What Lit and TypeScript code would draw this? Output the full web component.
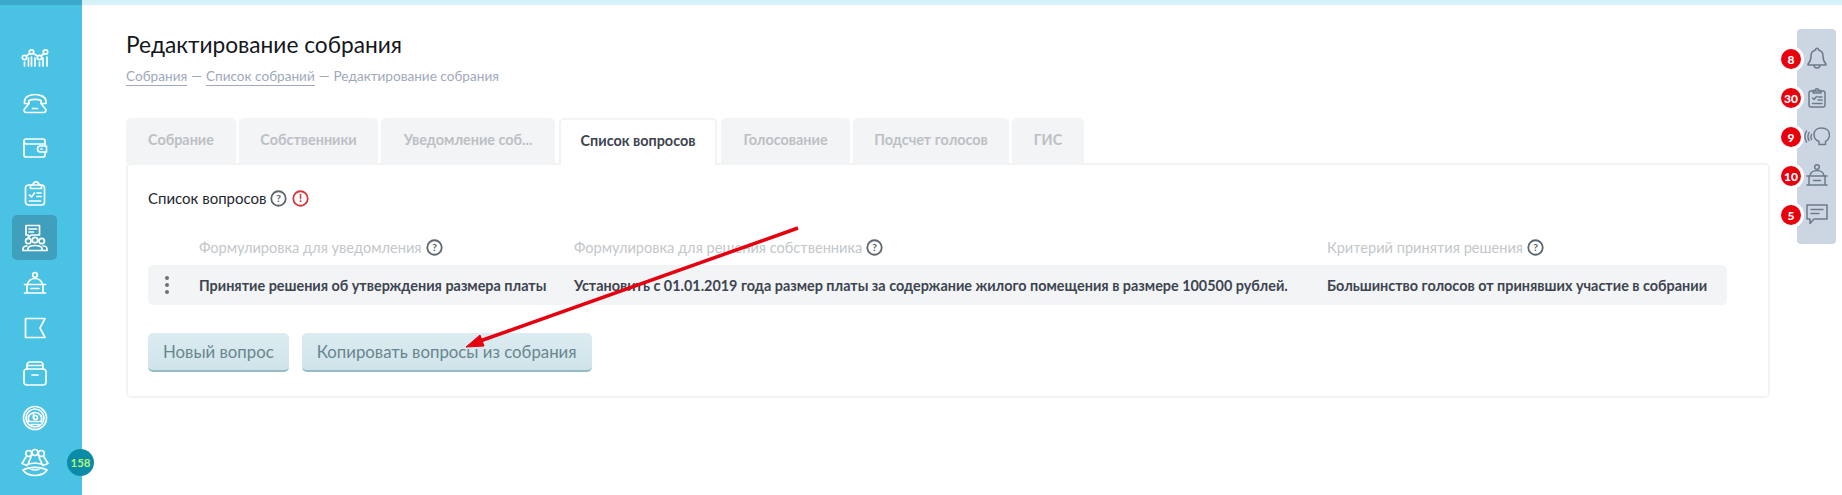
import { LitElement, html, css, svg } from "lit";
import { customElement } from "lit/decorators.js";

const sideIcons = [
  svg`<circle cx="4.500" cy="14.500" r="2.200"/><circle cx="11.500" cy="9" r="2.200"/><circle cx="19.500" cy="14.500" r="2.200"/><circle cx="25.500" cy="9" r="2.200"/><path d="M6.300 13.200l3.500-2.800M13.300 10.400l4.500 2.800M21.200 13l2.800-2.500M4.500 19v4M8.500 15v8M11.500 14v9M15 15v8M19.500 19v4M23 15v8M27 14v9"/>`,
  svg`<path d="M4.500 15.500v-2C4.500 8.500 10 6.500 15 6.500s11 2 11 7v2h-5v-3c-3-1.500-9-1.500-12 0v3zM9 15.500l-4.500 5.500c-1 2 0 3.500 2 3.500h17c2 0 3-1.500 2-3.500L21 15.500M12.500 20.500h5"/>`,
  svg`<path d="M25 12V8a2 2 0 0 0-2-2H6a2 2 0 0 0-2 2v14a2 2 0 0 0 2 2h17a2 2 0 0 0 2-2v-3M4 8.500a2.500 2.500 0 0 0 2.500 2.500H25"/><path d="M26.500 13h-6a3 3 0 0 0 0 6h6z"/><path d="M21 16h1"/>`,
  svg`<rect x="5.500" y="7" width="19" height="20" rx="3"/><path d="M10.500 10.500v-3l2.500-1c1-3.500 5-3.500 6 0l2.500 1v3zM9.500 17l2 2 3-4M17 15h4M17 18.500h4M9.500 23h11"/>`,
  svg`<path d="M6 2.500h13.500v9.500H11l-2.500 3v-3H6zM9 6h7.500M9 9h4.500"/><circle cx="8.300" cy="18" r="2.700"/><circle cx="15" cy="17" r="2.700"/><circle cx="21.700" cy="18" r="2.700"/><path d="M3 27.500v-1.500c0-2 1.500-3 4-3M27 27.500v-1.500c0-2-1.500-3-4-3M8 27.500v-1.500c0-2.500 3-3.500 7-3.500s7 1 7 3.500v1.500zM3 27.500h24"/>`,
  svg`<circle cx="15" cy="7" r="2.300"/><path d="M7.500 16c1-3 4-5.500 7.500-5.500s6.500 2.500 7.500 5.500M4.500 16.500h21M7 16.500v8.500h16v-8.500M4.500 25h21M11 20.500h8"/>`,
  svg`<path d="M5.500 5.500H25L20 15l5 9.500H5.500z"/>`,
  svg`<rect x="4" y="11" width="22" height="16" rx="3"/><path d="M7 11V7a3 3 0 0 1 3-3h10a3 3 0 0 1 3 3v4M7 7.500h16M12 17h6"/>`,
  svg`<circle cx="15" cy="15" r="11.500"/><circle cx="15" cy="15" r="9"/><path d="M8.800 18.500c-2-5.500 2-9 6.200-9s8.200 3.500 6.200 9zM11 21.500h8"/><circle cx="15.500" cy="14.500" r="2"/><path d="M13.500 10.500v4"/>`,
  svg`<circle cx="8.700" cy="5.500" r="3"/><circle cx="15" cy="4.500" r="3"/><circle cx="21.300" cy="5.500" r="3"/><path d="M6 9L2 15.500l5 2 1.500-1.500 6.500-1 6.500 1 1.500 1.500 5-2L24 9M11 9l-3 7M19 9l3 7M3 22c6-3.500 18-3.500 24 0-3 4.500-7 5.500-12 5.500S6 26.500 3 22zM10 20.500c2 2 8 2 10 0"/>`,
];

const rightIcons = [
  svg`<path d="M4 19c2-2 3-3.500 3-8 0-3.500 2.500-5.500 4.500-6 0-2.500 3-2.500 3 0 2 .5 4.500 2.500 4.500 6 0 4.500 1 6 3 8v1H4zM10 20c0 4 6 4 6 0"/>`,
  svg`<rect x="5" y="7" width="16" height="16" rx="2"/><path d="M9 9V6.500h2c.5-2.500 3.500-2.500 4 0h2V9zM8.500 14l1.500 1.500 2.500-3M14 13h4M14 16h4M8.500 19.500H18"/>`,
  svg`<path d="M15 21.500v-3c-3-1-5-3.500-5-7 0-4 3-6.500 7.500-6.500 4.500 0 8 2.500 8 7 0 3-1.500 5-4 6.500v3zM2.500 8c-2 3.500-2 7.500 0 11M5 9.500c-1.300 2.500-1.300 5.500 0 8M7.500 11.500c-.7 1.500-.7 3.500 0 5"/>`,
  svg`<circle cx="13" cy="5" r="2.300"/><path d="M6 13.500c.5-3 3.500-5 7-5s6.500 2 7 5M3 14h20M5 14v9h16v-9M3 23h20M9.500 18.500h7"/>`,
  svg`<path d="M3 4h20v14H10l-4 4.500V18H3zM7 8.500h12M7 12.500h8"/>`,
];

const Help = html`<svg class="help" viewBox="0 0 16 16"><circle cx="8" cy="8" r="6.800"/><text x="8" y="11.300" text-anchor="middle">?</text></svg>`;

@customElement("app-root")
export class AppRoot extends LitElement {
  static styles = css`
    :host { display: block; position: relative; height: 495px; overflow: hidden; background: #fff;
      font-family: "Lato", "Noto Sans", sans-serif; color: #222; }
    .top { height: 5px; background: #d6f1f7; }
    .top i { display: block; width: 82px; height: 5px; background: #3ba9cb; }
    .page { display: flex; height: 490px; }
    .side { width: 82px; flex: none; background: #4ac2e4; padding-top: 30px; box-sizing: border-box; position: relative; }
    .sitem { width: 45px; height: 45px; margin-left: 12px; display: flex; align-items: center; justify-content: center; border-radius: 5px; }
    .sitem.on { background: #3f9fbd; }
    .sitem svg { width: 30px; height: 30px; fill: none; stroke: #fff; stroke-width: 1.700; stroke-linejoin: round; stroke-linecap: round; }
    .count { position: absolute; left: 67px; top: 444px; width: 27px; height: 27px; border-radius: 50%; background: #0b8ba6; color: #b1f57b;
      font-size: 11.500px; font-weight: 700; display: flex; align-items: center; justify-content: center; }
    .main { flex: none; width: 1644px; margin-left: 44px; padding-top: 27px; }
    h1 { margin: 0; font-size: 22.700px; font-weight: 400; line-height: 26px; color: #14171c; }
    .crumbs { margin-top: 10px; font-size: 13.600px; line-height: 17px; color: #a0a9bb; display: flex; gap: 4px; }
    .crumbs a { border-bottom: 1px solid #a0a9bb; }
    .tabs { display: flex; margin-top: 32px; height: 45px; }
    .tab { height: 45px; box-sizing: border-box; background: #f2f4f6; color: #bcc0c4; font-size: 14.400px; font-weight: 700; border-radius: 5px 5px 0 0;
      display: flex; align-items: center; justify-content: center; margin-right: 3px; padding-bottom: 2px; }
    .tab.on { background: #fff; color: #3d4450; border: 2px solid #f2f3f5; border-bottom: 0; margin: 0 4px 0 1px; position: relative; z-index: 1; height: 47px; padding-bottom: 4px; }
    .panel { border: 2px solid #f2f3f5; border-radius: 5px; height: 235px; box-sizing: border-box; padding: 24px 41px 0 20px; }
    .ttl { font-size: 15px; line-height: 18px; color: #23282f; display: flex; align-items: center; gap: 4px; }
    .help { width: 17px; height: 17px; fill: none; stroke: #5b666e; stroke-width: 1.700; flex: none; }
    .help text { font-size: 9.500px; font-weight: 900; fill: #5b666e; stroke: none; font-family: "Lato", sans-serif; }
    .warn { width: 17px; height: 17px; flex: none; margin-left: 1px; fill: none; stroke: #d9363a; stroke-width: 1.700; }
    .warn text { font-size: 10.500px; font-weight: 900; fill: #d9363a; stroke: none; font-family: "Lato", sans-serif; }
    .grid { display: grid; grid-template-columns: 51px 375px 753px 1fr; }
    .hd { margin-top: 26px; height: 28px; align-items: center; font-size: 14.600px; color: #c3c7cb; }
    .hd div { display: flex; align-items: center; gap: 4px; }
    .row { margin-top: 4px; height: 40px; background: #f2f4f6; border-radius: 5px; align-items: center; font-size: 14.400px; font-weight: 700; color: #3d4450; white-space: nowrap; }
    .dots { display: flex; flex-direction: column; gap: 2.500px; align-items: center; width: 38px; }
    .dots i { width: 4.500px; height: 4.500px; border-radius: 50%; background: #68727b; }
    .btns { display: flex; gap: 13px; margin-top: 28px; }
    .btn { height: 39px; box-sizing: border-box; padding: 0 15px; border-radius: 5px; background: linear-gradient(#dcecf1, #cfe4ea); border-bottom: 2px solid #94bcc4;
      color: #69858e; font-size: 16.800px; display: flex; align-items: center; }
    .right { position: absolute; left: 1797px; top: 29px; width: 39px; height: 215px; padding-top: 9px; box-sizing: border-box; background: #ccd6e3; border-radius: 4px; }
    .ritem { height: 39px; position: relative; display: flex; align-items: center; justify-content: center; }
    .ritem svg { width: 26px; height: 26px; fill: none; stroke: #6c7b88; stroke-width: 1.500; stroke-linejoin: round; stroke-linecap: round; }
    .badge { position: absolute; left: -16px; top: 11px; width: 20px; height: 20px; border-radius: 50%; background: #e8000d; color: #fff; font-size: 12px; font-weight: 900;
      display: flex; align-items: center; justify-content: center; box-shadow: 0 0 0 3px #fff; }
    .arrow { position: absolute; left: 0; top: 0; width: 1842px; height: 495px; pointer-events: none; }
  `;

  render() {
    const tabs = [["Собрание", 110], ["Собственники", 139], ["Уведомление соб...", 174]];
    const tabs2 = [["Голосование", 129], ["Подсчет голосов", 156], ["ГИС", 72]];
    const badges = ["8", "30", "9", "10", "5"];
    return html`
      <div class="top"><i></i></div>
      <div class="page">
        <nav class="side">
          ${sideIcons.map((p, i) => html`<div class="sitem ${i === 4 ? "on" : ""}"><svg viewBox="0 0 30 30">${p}</svg></div>`)}
          <div class="count">158</div>
        </nav>
        <main class="main">
          <h1>Редактирование собрания</h1>
          <div class="crumbs"><a>Собрания</a><span>—</span><a>Список собраний</a><span>—</span><span>Редактирование собрания</span></div>
          <div class="tabs">
            ${tabs.map(([t, w]) => html`<div class="tab" style="width:${w}px">${t}</div>`)}
            <div class="tab on" style="width:158px">Список вопросов</div>
            ${tabs2.map(([t, w]) => html`<div class="tab" style="width:${w}px">${t}</div>`)}
          </div>
          <section class="panel">
            <div class="ttl">Список вопросов ${Help}
              <svg class="warn" viewBox="0 0 16 16"><circle cx="8" cy="8" r="6.800"/><text x="8" y="11.500" text-anchor="middle">!</text></svg>
            </div>
            <div class="grid hd">
              <span></span>
              <div>Формулировка для уведомления ${Help}</div>
              <div>Формулировка для решения собственника ${Help}</div>
              <div>Критерий принятия решения ${Help}</div>
            </div>
            <div class="grid row">
              <div class="dots"><i></i><i></i><i></i></div>
              <div>Принятие решения об утверждения размера платы</div>
              <div>Установить с 01.01.2019 года размер платы за содержание жилого помещения в размере 100500 рублей.</div>
              <div>Большинство голосов от принявших участие в собрании</div>
            </div>
            <div class="btns">
              <div class="btn">Новый вопрос</div>
              <div class="btn">Копировать вопросы из собрания</div>
            </div>
          </section>
        </main>
      </div>
      <aside class="right">
        ${rightIcons.map((p, i) => html`<div class="ritem"><span class="badge">${badges[i]}</span><svg viewBox="0 0 26 26">${p}</svg></div>`)}
      </aside>
      <svg class="arrow" viewBox="0 0 1842 495">
        <path d="M798 228L480 341" stroke="#e6000f" stroke-width="3.500" fill="none"/>
        <path d="M466 347l14-12 4 11z" fill="#e6000f" stroke="#e6000f" stroke-width="1"/>
      </svg>
    `;
  }
}
